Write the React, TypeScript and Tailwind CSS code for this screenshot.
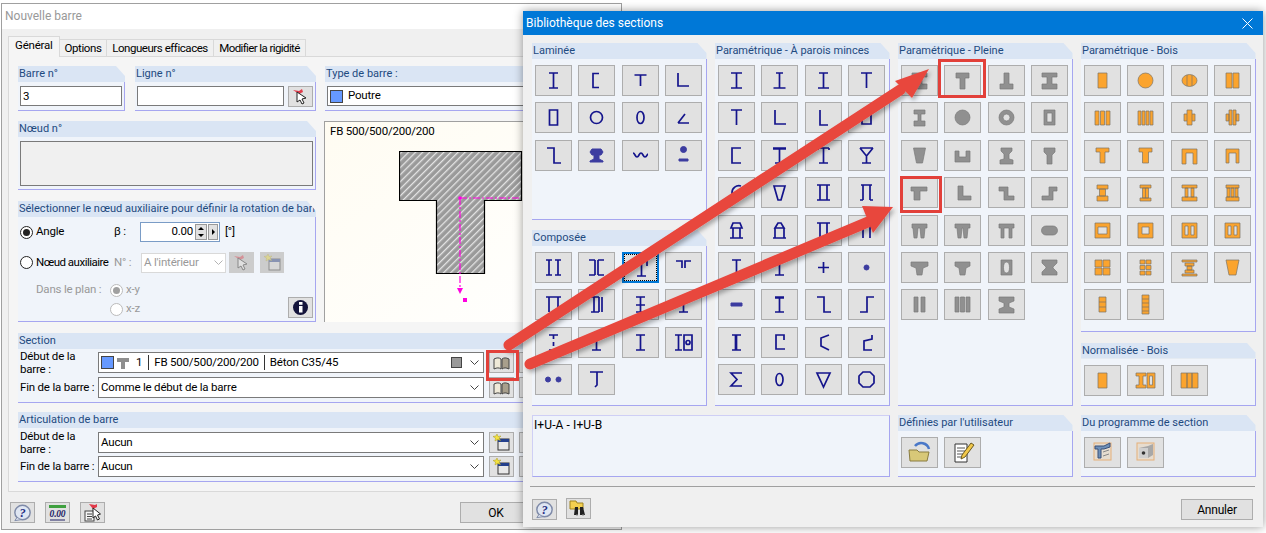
import React from "react";

type Ic = { k: "t" | "g" | "o" | "l"; d: string };
const t = (d: string): Ic => ({ k: "t", d });
const l = (d: string): Ic => ({ k: "l", d });
const g = (d: string): Ic => ({ k: "g", d });
const o = (d: string): Ic => ({ k: "o", d });

function Glyph({ ic }: { ic: Ic }) {
  const base = { t: { fill: "none", stroke: "#14148c", strokeWidth: 1.7 }, l: { fill: "#3c3ca0", stroke: "#3c3ca0", strokeWidth: 1 }, g: { fill: "#909090", stroke: "#7a7a7a", strokeWidth: 0.7 }, o: { fill: "#fba42e", stroke: "#7c7466", strokeWidth: 0.7 } }[ic.k];
  return (
    <svg width="37" height="31" viewBox="0 0 37 31" className="block absolute -left-px -top-px">
      <path d={ic.d} fillRule="evenodd" {...base} />
    </svg>
  );
}

function IconBtn({ ic, selected, children }: { ic?: Ic; selected?: boolean; children?: React.ReactNode }) {
  return (
    <div className={"relative w-[37px] h-[31px] bg-[#e1e1e1] border " + (selected ? "border-[#0078d7] border-2" : "border-[#adadad]")}>
      {selected && <div className="absolute inset-0 border border-dotted border-black" />}
      {ic && <Glyph ic={ic} />}
      {children}
    </div>
  );
}

function Group({ title, className, body, children }: { title: string; className?: string; body?: string; children?: React.ReactNode }) {
  return (
    <div className={"flex flex-col relative " + (className ?? "")}>
      <div className="h-[16px] shrink-0 bg-[#dae5f4] [clip-path:polygon(0_0,calc(100%-9px)_0,100%_10px,100%_100%,0_100%)] pl-[1px] text-[11px] leading-[16px] text-[#1e4a80] whitespace-nowrap overflow-hidden tracking-normal">
        {title}
      </div>
      <div className={"flex-1 bg-[#f0f4fa] border-b border-r border-[#a6a6f0] min-h-0 " + (body ?? "")}>{children}</div>
    </div>
  );
}

function Grid({ items, sel }: { items: Ic[]; sel?: number }) {
  return (
    <div className="grid grid-cols-[37px_37px_37px_37px] gap-x-[6.33px] gap-y-[6.42px] pl-[3px] pt-[6px]">
      {items.map((ic, i) => (
        <IconBtn key={i} ic={ic} selected={sel === i} />
      ))}
    </div>
  );
}

const laminee: Ic[] = [
  t("M14 8h9M18.5 8v15M14 23h9"),
  t("M21 8.5h-6v14h6"),
  t("M12.5 10h12M18.5 10v11"),
  t("M13 8v13h11"),
  t("M14.5 8h8v15h-8z"),
  t("M12.5 15.5a6 6 0 1 0 12 0a6 6 0 1 0 -12 0"),
  t("M15 15.5a3.5 6 0 1 0 7 0a3.5 6 0 1 0 -7 0"),
  t("M13 21h11M13 21l7-9"),
  t("M12 8h7v15h7"),
  l("M14 9h9l2 3-2 3h-2v4l4 2v1H12v-1l4-2v-4h-2l-2-3z"),
  t("M11 13c2 0 2 4 4 4s2-4 4-4 2 4 4 4 2-3 3-3"),
  l("M15.5 9.5a3 3 0 1 0 6 0a3 3 0 1 0 -6 0M14 19h9v2h-9z"),
];
const composee: Ic[] = [
  t("M11 8h6M14 8v15M11 23h6M20 8h6M23 8v15M20 23h6"),
  t("M11 8h6M17 8v15M11 23h6M20 8h6M20 8v15M20 23h6"),
  t("M13 8h11v5M18.5 8v15M14 23h9"),
  t("M11 9h6v7M26 9h-6v7"),
  t("M11 8h15M14 8v15M23 8v15"),
  t("M13 8h8M16 8v15M21 8v15M13 23h8M24 8v15"),
  t("M14 8h9M18.5 8v15M14 23h9M14 16h9"),
  t("M14 8h9M18.5 8v15M14 23h9"),
  t("M14 8h9M18.5 8v4M18.5 15v4M14 23h9"),
  t("M14 8h9M18.5 8v15M14 23h9"),
  t("M14 8h9M18.5 8v15M14 23h9"),
  t("M10 8h7M13.5 8v15M10 23h7M19 8h8v15h-8zM21 15.5a2 2 0 1 0 4 0a2 2 0 1 0 -4 0"),
  l("M10.5 15.5a2.5 2.5 0 1 0 5 0a2.5 2.5 0 1 0 -5 0M21 15.5a2.5 2.5 0 1 0 5 0a2.5 2.5 0 1 0 -5 0"),
  t("M12 8h13M19 8v13l-2 2"),
];
const minces: Ic[] = [
  t("M13 8h11M18.5 8v15M13 23h11"),
  t("M15 8h7M18.5 8v15M12.5 23h12"),
  t("M14 8h9M18.5 8v15M13 23h11"),
  t("M13 8h11M18.5 8v15"),
  t("M13 8h11M18.5 8v15"),
  t("M14 8v14h11"),
  t("M15 8v15h8"),
  t("M14 8v14h9v-14"),
  t("M23 8h-9v15h9"),
  t("M12 8h13M12 9h13M18.5 8v15M14 23h9"),
  t("M13 8h11M18.5 8v15M14 23h9M13 8v2M24 8v2"),
  t("M12 8h13M12 8l6.5 8M25 8l-6.5 8M18.5 16v7M14 23h9"),
  t("M23 9a7 7 0 0 0 -9 7v7"),
  t("M13 9h11l-4 14h-3z"),
  t("M12 8h13M12 23h13M15 8v15M22 8v15"),
  t("M13 8h11M15 8v15M22 8v15M12 23h3M22 23h3"),
  t("M15 8h7l2 5H13zM15 13v10M22 13v10M12 23h13"),
  t("M12 23h13M14 13v10M23 13v10M14 13l3-5h3l3 5z"),
  t("M12 8h13M15 8v15M22 8v15"),
  t("M13 8h11M15 8v15M22 8v15"),
  t("M14 8h9M18.5 8v15M14 23h9"),
  t("M14 8h9M18.5 8v15M14 23h9"),
  t("M18.5 10v11M13 15.5h11"),
  l("M16 15.5a2.5 2.5 0 1 0 5 0a2.5 2.5 0 1 0 -5 0"),
  l("M13 14h11v3H13z"),
  t("M14 8h9M14 9h9M18.5 8v15M14 23h9"),
  t("M12 8h7v15h7"),
  t("M26 8h-7v15h-7"),
  { k: "t", d: "M14 8h9M18.5 8v15M14 23h9M17.5 8v15" },
  t("M24 22h-9V8h8v5"),
  t("M24 8l-8 3v8l8 4"),
  t("M24 8v4l-8 2v9h8"),
  t("M24 9H13l6 6.5-6 6.5h11"),
  t("M15 15.5a3.5 6 0 1 0 7 0a3.5 6 0 1 0 -7 0"),
  t("M12 9h13l-6.5 14z"),
  t("M15 8h7l4 4v7l-4 4h-7l-4-4v-7z"),
];
const pleine: Ic[] = [
  g("M11 8h15v4h-5v7h5v5H11v-5h5v-7h-5z"),
  g("M12 8h13v5h-4v11h-5V13h-4z"),
  g("M16 8h5v11h4v5H12v-5h4z"),
  g("M11 8h15v4h-5v7h5v5H11v-5h5v-7h-5z"),
  g("M13 8h11v4h-4v7h4v5H13v-5h4v-7h-4z"),
  g("M11 15.5a7.5 7.5 0 1 0 15 0a7.5 7.5 0 1 0 -15 0z"),
  g("M11 15.5a7.5 7.5 0 1 0 15 0a7.5 7.5 0 1 0 -15 0zM15 15.5a3.5 3.5 0 1 0 7 0a3.5 3.5 0 1 0 -7 0z"),
  g("M13 8h11v15H13zM16 11h5v9h-5z"),
  g("M12.5 8h12l-3 15h-6z"),
  g("M11 11h4v6h7v-6h4v11H11z"),
  g("M13 8h11v3l-3 3v5l4 1v4H12v-4l4-1v-5l-3-3z"),
  g("M13 8h11v4l-3 3v9h-5v-9l-3-3z"),
  g("M10 10h16v4h-7v9h-6v-9h-3z"),
  g("M14 9h5v10h8v4H14z"),
  g("M11 10h9v9h6v4H16v-9h-5z"),
  g("M26 10v4h-4v9H11v-4h7v-9z"),
  g("M11 9h15v4h-2l-1 10h-3l-1-10h-2l-1 10h-3l-1-10h-1z"),
  g("M11 9h15v4h-2l-1 10h-3l-1-10h-1l-1 10h-3l-1-10h-2z"),
  g("M11 9h15v4h-2v10h-3V13h-5v10h-3V13h-2z"),
  g("M15 11h7a4.5 4.5 0 0 1 0 9h-7a4.5 4.5 0 0 1 0-9z"),
  g("M10 10h17v4l-5 2-1 7h-5l-1-7-5-2z"),
  g("M11 10h15v4l-4 2-1 7h-5l-1-7-4-2z"),
  g("M13 8h11v15H13zM18.5 10c-2 0-3 2-3 5.5s1 5.5 3 5.5 3-2 3-5.5-1-5.5-3-5.5z"),
  g("M11 8h15v3l-4 4v1l4 4v3H11v-3l4-4v-1l-4-4z"),
  g("M13 8h4v15h-4zM20 8h4v15h-4z"),
  g("M11 8h4v15h-4zM16.5 8h4v15h-4zM22 8h4v15h-4z"),
  g("M11 8h15v4l-5 2v4l5 2v4H11v-4l5-2v-4l-5-2z"),
];
const bois: Ic[] = [
  o("M14 8h9v15h-9z"),
  o("M11 15.5a7.5 7.5 0 1 0 15 0a7.5 7.5 0 1 0 -15 0z"),
  o("M11 15.5a7.5 6 0 1 0 15 0a7.5 6 0 1 0 -15 0zM16 10v11M21 10v11"),
  o("M12 8h6v15h-6zM19 8h6v15h-6z"),
  o("M11 9h4v14h-4zM16.5 9h4v14h-4zM22 9h4v14h-4z"),
  o("M11 9h3v14h-3zM15 9h3v14h-3zM19 9h3v14h-3zM23 9h3v14h-3z"),
  o("M16 8h5v4h3v7h-3v4h-5v-4h-3v-7h3zM16 12v7M21 12v7"),
  o("M15 8h3v15h-3zM19 8h3v15h-3zM12 12h3v7h-3zM22 12h3v7h-3z"),
  o("M12 8h13v4h-4v11h-5V12h-4z"),
  o("M12 8h13v4h-3.5v11h-6V12h-3.5z"),
  o("M11 9h15v15h-4V13h-7v11h-4z"),
  o("M12 9h13v14h-3V13h-7v10h-3z"),
  o("M13 8h11v4H13zM15.5 12h6v7h-6zM13 19h11v5H13z"),
  o("M13 8h11v3H13zM15.5 11h6v10h-6zM13 21h11v3H13zM18.5 11v10"),
  o("M11 8h15v3H11zM11 20h15v4H11zM14 11h3v9h-3zM20 11h3v9h-3z"),
  o("M12 8h13v3H12zM12 20h13v4H12zM13 11h3v9h-3zM17 11h3v9h-3zM21 11h3v9h-3z"),
  o("M11 8h15v15H11zM14 12h9v7h-9z"),
  o("M11 8h15v15H11zM15 12h7v7h-7z"),
  o("M11 8h15v15H11zM14 11h3v9h-3zM20 11h3v9h-3z"),
  o("M11 8h15v15H11zM14 11h3v9h-3zM20 11h3v9h-3z"),
  o("M11 8h7v7h-7zM19 8h7v7h-7zM11 16h7v7h-7zM19 16h7v7h-7z"),
  o("M13 8h5v4h-5zM19 8h5v4h-5zM13 13.5h5v4h-5zM19 13.5h5v4h-5zM13 19h5v4h-5zM19 19h5v4h-5z"),
  o("M11 8h15v2H11zM11 22h15v2H11zM14 11h9v3h-9zM14 18h9v3h-9zM16 14h5v4h-5z"),
  o("M12 8h13l-3 15h-7z"),
  o("M15 8h7v15h-7zM15 13h7M15 18h7"),
  o("M15 6h7v19h-7zM15 10h7M15 14h7M15 18h7M15 22h7"),
];
const norm: Ic[] = [
  o("M14 8h9v15h-9z"),
  o("M9 8h10v3h-3v9h3v3H9v-3h3v-9H9zM20 8h8v15h-8zM22.5 11h3v9h-3z"),
  o("M10 8h6v15h-6zM16 8h5v15h-5zM21 8h6v15h-6z"),
];

function Help() {
  return (
    <svg width="24" height="20" viewBox="0 0 24 20">
      <ellipse cx="12" cy="9.5" rx="8" ry="7.5" fill="#dfe6f2" stroke="#7e8aa8" strokeWidth="1.5" />
      <path d="M6 15l-2 3 6-1" fill="#dfe6f2" stroke="#7e8aa8" />
      <text x="12" y="14" textAnchor="middle" fontSize="13" fontWeight="700" fontStyle="italic" fill="#1e2a80" fontFamily="Liberation Serif">?</text>
    </svg>
  );
}
function Book() {
  return (
    <svg width="17" height="14" viewBox="0 0 17 14">
      <path d="M1 3c3-1.5 5-1.5 7 0v10c-2-1.5-4-1.5-7 0z" fill="#efe9d8" stroke="#444" />
      <path d="M16 3c-3-1.5-5-1.5-7 0v10c2-1.5 4-1.5 7 0z" fill="#a89f8c" stroke="#444" />
    </svg>
  );
}
function Pick({ dim }: { dim?: boolean }) {
  return (
    <svg width="17" height="17" viewBox="0 0 17 17" className={dim ? "opacity-40" : ""}>
      <path d="M1 2l6 1 3-2 1 3-4 2z" fill="#e23a4a" />
      <path d="M5 4l0 10 3-2 2 4 2-1-2-4 4-1z" fill="#fff" stroke="#222" strokeWidth="1" />
    </svg>
  );
}
function NewItem({ dim }: { dim?: boolean }) {
  return (
    <svg width="17" height="17" viewBox="0 0 17 17" className={dim ? "opacity-40" : ""}>
      <rect x="5" y="5" width="11" height="11" fill="#e8e8e8" stroke="#333" />
      <rect x="5" y="5" width="11" height="3" fill="#24408c" />
      <path d="M4 0l1 2.5L8 2 6 4l1.5 2.5L4.500 5.500 2 7l.5-3L0 2.500 3 2z" fill="#f4e23c" stroke="#a89a20" strokeWidth=".5" />
    </svg>
  );
}
function Chevron({ className }: { className?: string }) {
  return (
    <svg width="9" height="5" viewBox="0 0 9 5" className={className}>
      <path d="M.5.5l4 4 4-4" fill="none" stroke="#444" />
    </svg>
  );
}
function Radio({ checked, dim }: { checked?: boolean; dim?: boolean }) {
  return (
    <span className={"inline-flex items-center justify-center w-[13px] h-[13px] rounded-full border bg-white shrink-0 " + (dim ? "border-[#bbbbbb]" : "border-[#222222]")}>
      {checked && <span className={"w-[7px] h-[7px] rounded-full " + (dim ? "bg-[#a0a0a0]" : "bg-[#222222]")} />}
    </span>
  );
}
function SmallBtn({ children, dim, w = "w-[25px]" }: { children?: React.ReactNode; dim?: boolean; w?: string }) {
  return (
    <div className={"h-[21px] shrink-0 flex items-center justify-center border " + w + " " + (dim ? "bg-[#cccccc] border-[#cccccc]" : "bg-[#e1e1e1] border-[#adadad]")}>
      {children}
    </div>
  );
}
function Combo({ children }: { children: React.ReactNode }) {
  return (
    <div className="w-[386px] h-[21px] shrink-0 bg-white border border-[#7a7a7a] flex items-center pl-[2px] pr-[4px] text-black">
      <div className="flex-1 flex items-center min-w-0">{children}</div>
      <Chevron />
    </div>
  );
}

export default function App() {
  return (
    <div className="relative w-[1266px] h-[533px] overflow-hidden bg-white text-[11.5px] tracking-[-0.2px] text-black font-['Roboto','Noto_Sans',sans-serif]">
      {/* Left window */}
      <div className="absolute left-[1px] top-[3px] w-[621px] h-[527px] bg-[#f0f0f0] border border-[#a0a0a0] flex flex-col">
        <div className="h-[25px] shrink-0 bg-white pl-[3px] text-[12px] tracking-normal leading-[25px] text-[#999999]">Nouvelle barre</div>
        <div className="px-[6px] pt-[8px] flex-1 flex flex-col">
          <div className="flex items-end h-[20px] relative z-10 -mb-px whitespace-nowrap">
            <div className="w-[52px] h-[21px] bg-[#f5f5f5] border border-b-0 border-[#d9d9d9] pl-[6px] leading-[17px]">Général</div>
            <div className="w-[47px] h-[18px] bg-[#f0f0f0] border border-[#d9d9d9] border-l-0 text-center leading-[17px] tracking-[-0.4px]">Options</div>
            <div className="w-[107px] h-[18px] bg-[#f0f0f0] border border-[#d9d9d9] border-l-0 text-center leading-[17px] tracking-[-0.45px]">Longueurs efficaces</div>
            <div className="w-[92px] h-[18px] bg-[#f0f0f0] border border-[#d9d9d9] border-l-0 text-center leading-[17px] tracking-[-0.6px]">Modifier la rigidité</div>
          </div>
          <div className="h-[436px] w-[608px] bg-[#f5f5f5] border border-[#d9d9d9] px-[9px] pt-[9px] overflow-hidden">
            <div className="flex gap-[8px] h-[256px]">
              <div className="w-[298px] flex flex-col shrink-0">
                <div className="flex h-[45px]">
                  <Group title="Barre n°" className="w-[107px]" body="px-[2px] pt-[4px]">
                    <div className="h-[20px] bg-white border border-[#7a7a7a] pl-[2px] leading-[18px]">3</div>
                  </Group>
                  <Group title="Ligne n°" className="w-[181px] ml-[10px]" body="pl-[2px] pt-[4px] flex gap-[4px]">
                    <div className="w-[147px] h-[20px] bg-white border border-[#7a7a7a]" />
                    <SmallBtn><Pick /></SmallBtn>
                  </Group>
                </div>
                <Group title="Nœud n°" className="h-[69px] mt-[10px]" body="px-[2px] pt-[4px]">
                  <div className="h-[45px] bg-[#f0f0f0] border border-[#7a7a7a]" />
                </Group>
                <Group title="Sélectionner le nœud auxiliaire pour définir la rotation de barre" className="h-[121px] mt-[11px]" body="relative">
                  <div className="flex items-center h-[20px] mt-[5px] pl-[2px]">
                    <Radio checked />
                    <span className="ml-[3px] w-[78px]">Angle</span>
                    <span className="w-[26px]">β :</span>
                    <div className="w-[80px] h-[20px] bg-white border border-[#7a9cc6] flex items-center justify-end pr-[1px] gap-[1px]">
                      <span className="mr-[1px]">0.00</span>
                      <div className="w-[12px] h-[16px] bg-[#e1e1e1] border border-[#999999] flex flex-col items-center justify-around">
                        <span className="w-0 h-0 border-x-[3px] border-x-transparent border-b-[3px] border-b-black" />
                        <span className="w-0 h-0 border-x-[3px] border-x-transparent border-t-[3px] border-t-black" />
                      </div>
                      <div className="w-[10px] h-[16px] bg-[#e1e1e1] border border-[#999999] flex items-center justify-center">
                        <span className="w-0 h-0 border-y-[3px] border-y-transparent border-l-[3px] border-l-black" />
                      </div>
                    </div>
                    <span className="ml-[5px]">[°]</span>
                  </div>
                  <div className="flex items-center h-[21px] mt-[10px] pl-[2px]">
                    <Radio />
                    <span className="ml-[3px] w-[78px] whitespace-nowrap tracking-[-0.5px]">Nœud auxiliaire</span>
                    <span className="w-[27px] text-[#999999]">N° :</span>
                    <div className="w-[85px] h-[20px] bg-white border border-[#d9d9d9] flex items-center justify-between px-[2px] text-[#999999]">
                      A l'intérieur
                      <Chevron className="opacity-40" />
                    </div>
                    <div className="ml-[3px]"><SmallBtn dim><Pick dim /></SmallBtn></div>
                    <div className="ml-[6px]"><SmallBtn dim w="w-[24px]"><NewItem dim /></SmallBtn></div>
                  </div>
                  <div className="flex items-center h-[16px] mt-[9px] pl-[18px] text-[#999999] whitespace-nowrap">
                    <span className="w-[74px]">Dans le plan :</span>
                    <Radio checked dim />
                    <span className="ml-[3px]">x-y</span>
                  </div>
                  <div className="flex items-center h-[16px] mt-[3px] pl-[92px] text-[#999999]">
                    <Radio dim />
                    <span className="ml-[3px]">x-z</span>
                  </div>
                  <div className="absolute right-[2px] bottom-[3px]">
                    <SmallBtn>
                      <svg width="17" height="17" viewBox="0 0 17 17">
                        <circle cx="8.500" cy="8.500" r="7.500" fill="#14143c" />
                        <rect x="7" y="7" width="3.500" height="6.500" fill="#fff" />
                        <rect x="7" y="3" width="3.500" height="2.800" fill="#fff" />
                      </svg>
                    </SmallBtn>
                  </div>
                </Group>
              </div>
              <div className="flex flex-col flex-1 min-w-0">
                <Group title="Type de barre :" className="h-[45px] ml-[1px]" body="px-[2px] pt-[4px]">
                  <div className="h-[20px] bg-white border border-[#7a7a7a] flex items-center pl-[2px] gap-[5px]">
                    <span className="w-[13px] h-[13px] bg-[#6699ff] border border-[#444444]" />
                    Poutre
                  </div>
                </Group>
                <div className="relative h-[201px] mt-[10px] border-l border-t border-[#a0a0a0] bg-gradient-to-br from-[#fffcf2] to-white pl-[5px] leading-[17px] pt-[1px]">
                  FB 500/500/200/200
                  <svg width="200" height="190" viewBox="0 0 200 190" className="absolute left-[74px] top-[29px]">
                    <defs>
                      <pattern id="h" width="5" height="5" patternUnits="userSpaceOnUse" patternTransform="rotate(45)">
                        <rect width="5" height="5" fill="#9a9a9a" />
                        <rect x="2" width="1.300" height="5" fill="#e4e4e4" />
                      </pattern>
                    </defs>
                    <path d="M.500.500h122v49h-37v73h-48v-73h-37z" fill="url(#h)" stroke="#000" strokeWidth="1.200" />
                    <path d="M61 47h60M61 47v92" stroke="#ff00e0" strokeWidth="1.200" strokeDasharray="7 2 2 2" fill="none" />
                    <circle cx="61" cy="47" r="1.800" fill="#ff00e0" />
                    <path d="M58 137h6l-3 6z" fill="#ff00e0" />
                    <rect x="64" y="147" width="4" height="4" fill="#ff00e0" />
                  </svg>
                </div>
              </div>
            </div>
            <Group title="Section" className="h-[70px] mt-[11px] w-[594px]" body="px-[2px] pt-[3px]">
              <div className="flex flex-col gap-[4px]">
                <div className="flex h-[21px] items-center">
                  <span className="w-[78px] leading-[13px] shrink-0">Début de la barre :</span>
                  <Combo>
                    <span className="w-[13px] h-[13px] bg-[#6699ff] border border-[#444444]" />
                    <svg width="12" height="12" viewBox="0 0 12 12" className="ml-[3px]"><path d="M0 1h12v4H8v7H4V5H0z" fill="#8e8e8e" /></svg>
                    <span className="ml-[7px]">1</span>
                    <span className="ml-[6px] w-px h-[15px] bg-[#333333]" />
                    <span className="ml-[5px]">FB 500/500/200/200</span>
                    <span className="ml-[5px] w-px h-[15px] bg-[#333333]" />
                    <span className="ml-[5px]">Béton C35/45</span>
                    <span className="ml-auto mr-[8px] w-[11px] h-[11px] bg-[#999999] border border-[#444444]" />
                  </Combo>
                  <div className="ml-[5px]"><SmallBtn><Book /></SmallBtn></div>
                  <div className="ml-[5px]"><SmallBtn /></div>
                </div>
                <div className="flex h-[21px] items-center">
                  <span className="w-[78px] shrink-0 whitespace-nowrap">Fin de la barre :</span>
                  <Combo>Comme le début de la barre</Combo>
                  <div className="ml-[5px]"><SmallBtn><Book /></SmallBtn></div>
                  <div className="ml-[5px]"><SmallBtn /></div>
                </div>
              </div>
            </Group>
            <Group title="Articulation de barre" className="h-[70px] mt-[9px] w-[594px]" body="px-[2px] pt-[4px]">
              <div className="flex flex-col gap-[3px]">
                <div className="flex h-[21px] items-center">
                  <span className="w-[78px] leading-[13px] shrink-0">Début de la barre :</span>
                  <Combo>Aucun</Combo>
                  <div className="ml-[5px]"><SmallBtn><NewItem /></SmallBtn></div>
                  <div className="ml-[5px]"><SmallBtn /></div>
                </div>
                <div className="flex h-[21px] items-center">
                  <span className="w-[78px] shrink-0 whitespace-nowrap">Fin de la barre :</span>
                  <Combo>Aucun</Combo>
                  <div className="ml-[5px]"><SmallBtn><NewItem /></SmallBtn></div>
                  <div className="ml-[5px]"><SmallBtn /></div>
                </div>
              </div>
            </Group>
          </div>
          <div className="flex mt-[10px] pl-[2px]">
            <SmallBtn><Help /></SmallBtn>
            <div className="ml-[10px]">
              <SmallBtn>
                <svg width="19" height="16" viewBox="0 0 19 16">
                  <rect x="1" y="0" width="17" height="3" fill="#3fa03f" />
                  <text x="9.500" y="12" textAnchor="middle" fontSize="9.500" fontWeight="700" fontStyle="italic" fill="#222266" fontFamily="Liberation Serif">0.00</text>
                  <path d="M2 15h15" stroke="#222266" />
                </svg>
              </SmallBtn>
            </div>
            <div className="ml-[10px]">
              <SmallBtn>
                <svg width="19" height="19" viewBox="0 0 19 19">
                  <rect x="2" y="8" width="9" height="10" fill="#f5f5f5" stroke="#444" />
                  <path d="M4 11h5M4 13.500h5M4 16h5" stroke="#444" />
                  <path d="M6 1l6 1 2 -1 0 3-4 2z" fill="#e23a4a" />
                  <path d="M10 5v10l2.500-2 2 4 2-1-2-4 3-1z" fill="#fff" stroke="#222" />
                </svg>
              </SmallBtn>
            </div>
            <div className="ml-[355px] w-[75px] h-[21px] bg-[#e1e1e1] border border-[#adadad] flex items-center justify-center pr-[3px] text-[12px]">OK</div>
          </div>
        </div>
      </div>

      {/* Right window */}
      <div className="absolute left-[523px] top-[11px] w-[740px] h-[516px] bg-[#f0f0f0] shadow-[0_0_9px_rgba(0,0,0,0.4)] flex flex-col">
        <div className="h-[24px] shrink-0 bg-[#0078d7] text-white pl-[3px] pr-[10px] flex items-center justify-between text-[12px] tracking-normal">
          <span>Bibliothèque des sections</span>
          <svg width="11" height="11" viewBox="0 0 11 11"><path d="M.500.500l10 10M10.500.500l-10 10" stroke="#fff" strokeWidth="1" /></svg>
        </div>
        <div className="flex gap-[8.5px] pl-[9px] pt-[8px] h-[370.5px]">
          <div className="w-[174.5px] flex flex-col gap-[10.5px]">
            <Group title="Laminée" className="h-[176.5px]"><Grid items={laminee} /></Group>
            <Group title="Composée" className="flex-1"><Grid items={composee} sel={2} /></Group>
          </div>
          <Group title="Paramétrique - À parois minces" className="w-[174.5px]"><Grid items={minces} /></Group>
          <Group title="Paramétrique - Pleine" className="w-[174.5px]"><Grid items={pleine} /></Group>
          <div className="w-[174.5px] flex flex-col gap-[10.5px]">
            <Group title="Paramétrique - Bois" className="h-[289px]"><Grid items={bois} /></Group>
            <Group title="Normalisée - Bois" className="flex-1"><Grid items={norm} /></Group>
          </div>
        </div>
        <div className="flex gap-[8.5px] pl-[9px] mt-[9.5px] h-[62px]">
          <div className="w-[357.5px] bg-[#f0f4fa] border border-[#cfcff5] border-b-[#a6a6f0] border-r-[#a6a6f0] pl-[1px] leading-[18px] text-[12px] tracking-[0.1px]">I+U-A - I+U-B</div>
          <Group title="Définies par l'utilisateur" className="w-[174.5px]">
            <div className="flex gap-[6.33px] pl-[3px] pt-[6px]">
              <IconBtn>
                <svg width="26" height="22" viewBox="0 0 26 22" className="absolute left-[5px] top-[3px]">
                  <path d="M8 5a8 8 0 0 1 14 3" fill="none" stroke="#4a78c8" strokeWidth="2.500" />
                  <path d="M2 9h8l2 2h10l-2 9H3z" fill="#d8c878" stroke="#8a7c40" />
                </svg>
              </IconBtn>
              <IconBtn>
                <svg width="24" height="24" viewBox="0 0 24 24" className="absolute left-[7px] top-[3px]">
                  <path d="M3 3h12v18H3z" fill="#fff" stroke="#333" />
                  <path d="M5 7h8M5 10h8M5 13h8M5 16h6" stroke="#555" />
                  <path d="M19 2l3 2-9 12-4 2 1-4z" fill="#f2c84a" stroke="#6a5a20" />
                </svg>
              </IconBtn>
            </div>
          </Group>
          <Group title="Du programme de section" className="w-[174.5px]">
            <div className="flex gap-[6.33px] pl-[3px] pt-[6px]">
              <IconBtn>
                <svg width="20" height="20" viewBox="0 0 20 20" className="absolute left-[8px] top-[4px]">
                  <rect x="1" y="1" width="17" height="17" fill="#e6dccf" stroke="#e6b078" />
                  <path d="M2 4h9l6-3v4l-6 2H8v9H5V7H2z" fill="#6f90b8" stroke="#3a5078" />
                  <path d="M10 10l6-2M10 14l6-2" stroke="#888" />
                </svg>
              </IconBtn>
              <IconBtn>
                <svg width="20" height="20" viewBox="0 0 20 20" className="absolute left-[8px] top-[4px]">
                  <rect x="1" y="1" width="17" height="17" fill="#e6dccf" stroke="#e6b078" />
                  <path d="M3 6l9-2 5-2v11l-5 3H3z" fill="#a8a8a8" />
                  <path d="M3 6h9v10H3z" fill="#cfcfcf" />
                  <circle cx="7.500" cy="11" r="1.800" fill="#333" />
                </svg>
              </IconBtn>
            </div>
          </Group>
        </div>
        <div className="h-px bg-[#a0a0a0] ml-[7px] mr-[8px] mt-[9px]" />
        <div className="flex items-start pl-[9px] pr-[10px] mt-[12px]">
          <SmallBtn><Help /></SmallBtn>
          <div className="ml-[9px] -mt-px">
            <SmallBtn>
              <svg width="20" height="18" viewBox="0 0 20 18">
                <path d="M1 1h6l1 2h6v6H1z" fill="#f4d050" stroke="#a08420" />
                <path d="M6 7h3v8H5zM11 7h3l2 8h-5z" fill="#222" />
                <path d="M7 15h2M13 15h2" stroke="#888" />
              </svg>
            </SmallBtn>
          </div>
          <div className="ml-auto w-[72px] h-[21px] bg-[#e1e1e1] border border-[#adadad] flex items-center justify-center text-[12px]">Annuler</div>
        </div>
      </div>

      {/* Arrows and highlight boxes */}
      <svg width="1266" height="533" viewBox="0 0 1266 533" className="absolute left-0 top-0 pointer-events-none">
        <defs>
          <filter id="sh" x="-5%" y="-5%" width="110%" height="110%">
            <feDropShadow dx="2" dy="3" stdDeviation="2" floodColor="#000" floodOpacity=".3" />
          </filter>
        </defs>
        <g filter="url(#sh)" fill="#e8463e" stroke="none">
          <path d="M509 345L900 90" stroke="#e8463e" strokeWidth="11" strokeLinecap="round" fill="none" />
          <path d="M929 69L895 81L912 98z" />
          <path d="M530 364L868 222" stroke="#e8463e" strokeWidth="11" strokeLinecap="round" fill="none" />
          <path d="M893 207L862 206L873 233z" />
        </g>
        <g fill="none" stroke="#e2403a" strokeWidth="3">
          <rect x="487.500" y="351.500" width="30" height="28" />
          <rect x="939.500" y="60.500" width="45" height="36" />
          <rect x="901.500" y="177.500" width="39" height="34" />
        </g>
      </svg>
    </div>
  );
}
